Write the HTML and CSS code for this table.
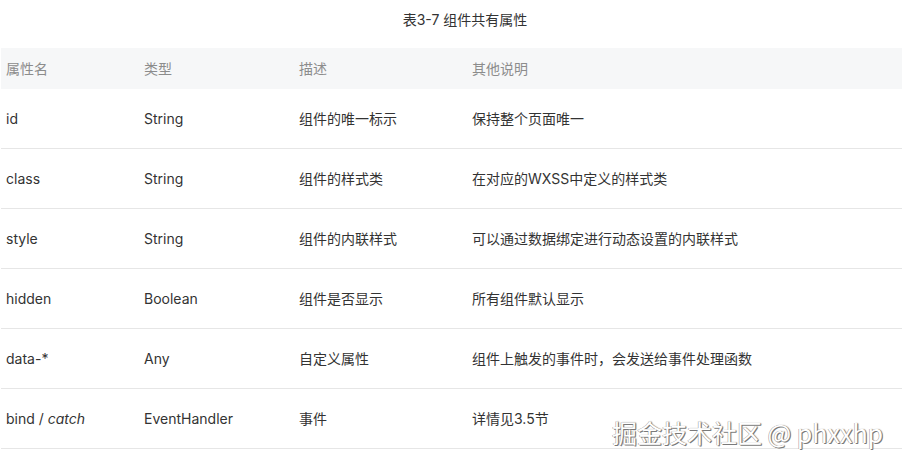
FILE: index.html
```html
<!DOCTYPE html>
<html lang="zh-CN">
<head>
<meta charset="utf-8">
<link rel="stylesheet" href="styles.css">
</head>
<body>
<div class="page">
  <div class="caption">表3-7 组件共有属性</div>
  <table class="attrs">
    <colgroup>
      <col class="c1"><col class="c2"><col class="c3"><col class="c4">
    </colgroup>
    <thead>
      <tr><th>属性名</th><th>类型</th><th>描述</th><th>其他说明</th></tr>
    </thead>
    <tbody>
      <tr><td>id</td><td>String</td><td>组件的唯一标示</td><td>保持整个页面唯一</td></tr>
      <tr><td>class</td><td>String</td><td>组件的样式类</td><td>在对应的WXSS中定义的样式类</td></tr>
      <tr><td>style</td><td>String</td><td>组件的内联样式</td><td>可以通过数据绑定进行动态设置的内联样式</td></tr>
      <tr><td>hidden</td><td>Boolean</td><td>组件是否显示</td><td>所有组件默认显示</td></tr>
      <tr><td>data-*</td><td>Any</td><td>自定义属性</td><td>组件上触发的事件时，会发送给事件处理函数</td></tr>
      <tr><td>bind / <em>catch</em></td><td>EventHandler</td><td>事件</td><td>详情见3.5节</td></tr>
    </tbody>
  </table>
  <div class="watermark">掘金技术社区 @ phxxhp</div>
</div>
</body>
</html>
```
FILE: styles.css
```css
html, body {
  margin: 0;
  padding: 0;
  background: #ffffff;
}
.page {
  position: relative;
  width: 902px;
  height: 464px;
  font-family: "Inter", "Noto Sans CJK SC", sans-serif;
  color: #333333;
}
.caption {
  height: 48px;
  box-sizing: border-box;
  padding-top: 10px;
  padding-left: 28px;
  text-align: center;
  font-size: 14px;
  line-height: 20px;
  color: #333333;
}
.attrs {
  margin-left: 1px;
  width: 901px;
  border-collapse: collapse;
  table-layout: fixed;
  font-size: 14px;
}
.c1 { width: 138px; }
.c2 { width: 155px; }
.c3 { width: 173px; }
.c4 { width: auto; }
.attrs th {
  background: #f6f7f8;
  color: #8c8c8c;
  font-weight: normal;
  text-align: left;
  height: 41px;
  padding: 0 0 0 5px;
  line-height: 20px;
}
.attrs td {
  height: 59px;
  padding: 0 0 0 5px;
  border-bottom: 1px solid #e6e6e6;
  line-height: 20px;
  color: #333333;
}
.attrs em {
  font-style: italic;
}
.watermark {
  position: absolute;
  left: 612px;
  top: 416px;
  font-size: 25px;
  line-height: 32px;
  color: #ffffff;
  font-family: "Noto Sans CJK SC", "Liberation Sans", sans-serif;
  text-shadow: 1px 1px 0 #7a7a7a, -0.5px -0.5px 0 #9a9a9a, 1px 0 1px #888;
}
```
